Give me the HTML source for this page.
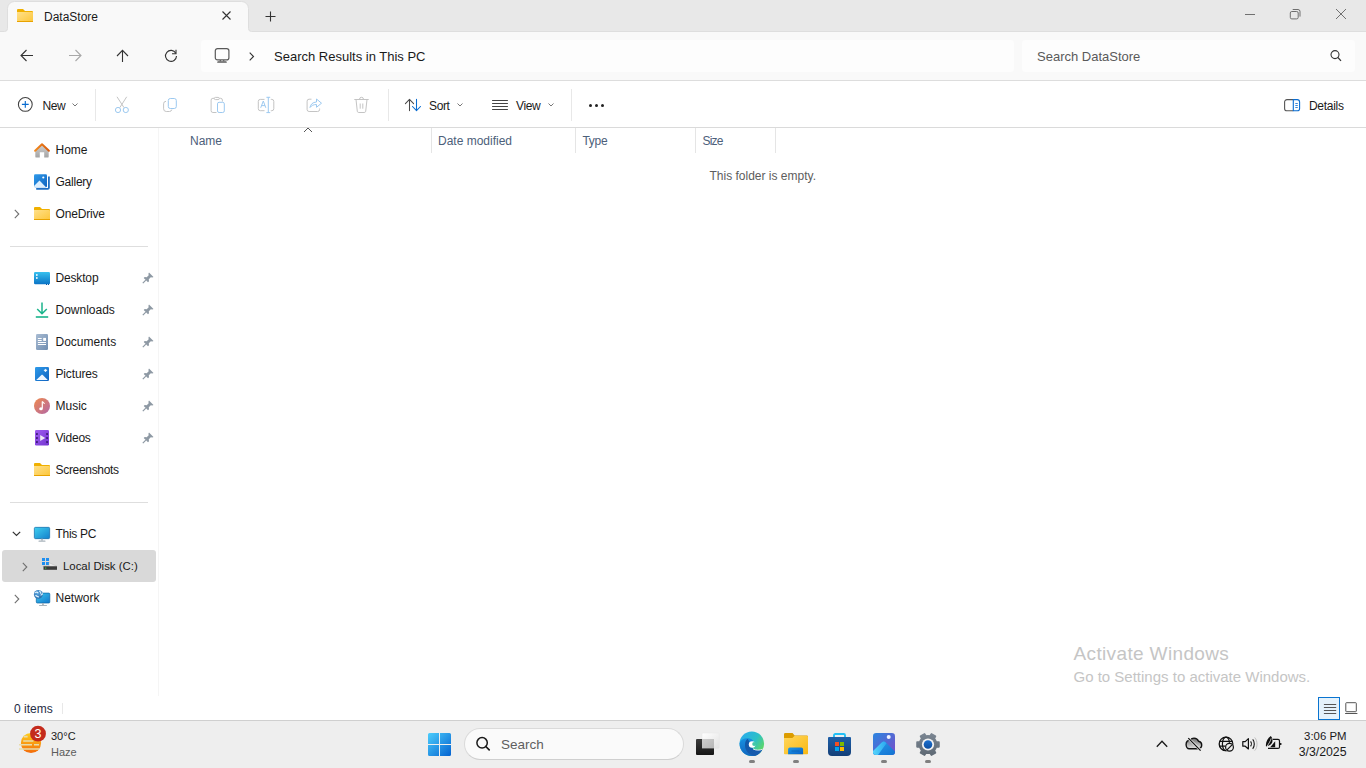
<!DOCTYPE html>
<html><head><meta charset="utf-8">
<style>
html,body{margin:0;padding:0;width:1366px;height:768px;overflow:hidden;background:#fff}
body{font-family:"Liberation Sans",sans-serif;position:relative;color:#1a1a1a}
.a{position:absolute}
.t{position:absolute;white-space:pre;font-size:12px;line-height:12px}
svg{position:absolute;overflow:visible}
</style></head><body>

<!-- title bar -->
<div class="a" style="left:0;top:0;width:1366px;height:32px;background:#e8e8e8"></div>
<svg style="left:0;top:0" width="1366" height="34" viewBox="0 0 1366 34">
<path d="M0 31.5H4.5A3 3 0 0 0 7.5 28.5V8.5A7 7 0 0 1 14.5 1.5H241.5A7 7 0 0 1 248.5 8.5V28.5A3 3 0 0 0 251.5 31.5H1366V34H0Z" fill="#f9f9f9"/>
<path d="M0 31.5H4.5A3 3 0 0 0 7.5 28.5V8.5A7 7 0 0 1 14.5 1.5H241.5A7 7 0 0 1 248.5 8.5V28.5A3 3 0 0 0 251.5 31.5H1366" fill="none" stroke="#dedede" stroke-width="1"/>
</svg>
<!-- address row -->
<div class="a" style="left:0;top:32px;width:1366px;height:48px;background:#f9f9f9"></div>
<div class="a" style="left:0;top:80px;width:1366px;height:1px;background:#dddddd"></div>

<!-- tab content -->
<svg style="left:17px;top:9px" width="16" height="13" viewBox="0 0 16 13">
  <defs><linearGradient id="fg" x1="0" y1="0" x2="1" y2="1"><stop offset="0" stop-color="#ffe08a"/><stop offset="1" stop-color="#fcc63a"/></linearGradient></defs>
  <path d="M1 0h5l2 2h7a1 1 0 0 1 1 1v1H0V1a1 1 0 0 1 1-1z" fill="#f0b000"/>
  <path d="M0 3h15a1 1 0 0 1 1 1v8a1 1 0 0 1-1 1H1a1 1 0 0 1-1-1z" fill="url(#fg)"/>
  <rect x="0" y="12" width="16" height="1" fill="#e8a200"/>
</svg>
<div class="t" style="left:44px;top:10.8px;color:#1a1a1a">DataStore</div>
<svg style="left:222px;top:11px" width="9" height="9"><path d="M0.5 0.5L8.5 8.5M8.5 0.5L0.5 8.5" stroke="#333" stroke-width="1.1"/></svg>
<svg style="left:265px;top:11px" width="11" height="11"><path d="M5.5 0.5V10.5M0.5 5.5H10.5" stroke="#333" stroke-width="1.1"/></svg>

<!-- window controls -->
<div class="a" style="left:1245px;top:14px;width:10px;height:1px;background:#707070"></div>
<svg style="left:1289px;top:8px" width="13" height="13"><rect x="1.3" y="3.5" width="7.9" height="7.4" rx="1.5" fill="none" stroke="#6e6e6e" stroke-width="1"/><path d="M3.7 1.5H9A2 2 0 0 1 11 3.5V8.6" fill="none" stroke="#6e6e6e" stroke-width="1"/></svg>
<svg style="left:1336px;top:9px" width="10" height="10"><path d="M0 0L10 10M10 0L0 10" stroke="#707070" stroke-width="1"/></svg>

<!-- nav buttons -->
<svg style="left:20px;top:49px" width="14" height="13"><path d="M13 6.5H1.5M6.5 1L1 6.5L6.5 12" fill="none" stroke="#333" stroke-width="1.1"/></svg>
<svg style="left:68px;top:49px" width="14" height="13"><path d="M1 6.5H12.5M7.5 1L13 6.5L7.5 12" fill="none" stroke="#a8a8a8" stroke-width="1.1"/></svg>
<svg style="left:116px;top:49px" width="13" height="14"><path d="M6.5 13V1.5M1 7L6.5 1.3L12 7" fill="none" stroke="#333" stroke-width="1.1"/></svg>
<svg style="left:164px;top:49px" width="14" height="14"><path d="M11.8 4.2A5.5 5.5 0 1 0 12.5 7" fill="none" stroke="#333" stroke-width="1.1"/><path d="M12 0.8V4.8H8" fill="none" stroke="#333" stroke-width="1.1"/></svg>

<!-- address box -->
<div class="a" style="left:201px;top:40px;width:813px;height:32px;background:#fdfdfd;border-radius:4px"></div>
<svg style="left:214px;top:47px" width="16" height="17" viewBox="0 0 16 17"><rect x="1.3" y="1.6" width="13.6" height="11.3" rx="2.2" fill="none" stroke="#5a5a5a" stroke-width="1.2"/><path d="M5.7 12.9H6.9V14.2H5.7ZM9.2 12.9H10.3V14.2H9.2Z" fill="#5a5a5a"/><path d="M3.6 14.2H12.4L12.9 15.8H3.1Z" fill="#5a5a5a"/></svg>
<svg style="left:249px;top:52px" width="6" height="9"><path d="M0.7 0.7L4.5 4.5L0.7 8.3" fill="none" stroke="#333" stroke-width="1.1"/></svg>
<div class="t" style="left:274px;top:49.8px;font-size:13px;line-height:13px;color:#1a1a1a">Search Results in This PC</div>

<!-- search box -->
<div class="a" style="left:1022px;top:40px;width:333px;height:32px;background:#fdfdfd;border-radius:4px"></div>
<div class="t" style="left:1037px;top:49.8px;font-size:13px;line-height:13px;color:#5a5a5a">Search DataStore</div>
<svg style="left:1330px;top:49px" width="13" height="13"><circle cx="5" cy="5.6" r="4" fill="none" stroke="#333" stroke-width="1.1"/><path d="M7.9 8.5L11 11.8" stroke="#333" stroke-width="1.2"/></svg>

<!-- command bar -->
<div class="a" style="left:0;top:127px;width:1366px;height:1px;background:#dadada"></div>
<svg style="left:17px;top:96px" width="17" height="17"><circle cx="8.3" cy="8.4" r="6.9" fill="none" stroke="#404040" stroke-width="1.05"/><path d="M8.3 5V11.8M4.9 8.4H11.7" stroke="#0a6cd0" stroke-width="1.15"/></svg>
<div class="t" style="left:42.5px;top:99.6px;letter-spacing:-0.4px">New</div>
<svg style="left:72px;top:103px" width="6" height="4"><path d="M0.5 0.5L3 3L5.5 0.5" fill="none" stroke="#777" stroke-width="1"/></svg>
<div class="a" style="left:95px;top:89px;width:1px;height:32px;background:#e8e8e8"></div>


<!-- disabled clipboard icons -->
<svg style="left:110px;top:92px" width="24" height="24" viewBox="0 0 24 24">
  <path d="M7 4.8L14 15.6M16.7 4.8L9.8 15.6" stroke="#c4c4c4" stroke-width="1"/>
  <circle cx="8" cy="18" r="2.6" fill="none" stroke="#9cc9f0" stroke-width="1"/>
  <circle cx="15.8" cy="18" r="2.6" fill="none" stroke="#9cc9f0" stroke-width="1"/>
</svg>
<svg style="left:158px;top:92px" width="24" height="24" viewBox="0 0 24 24">
  <rect x="10.3" y="6.5" width="8" height="10" rx="2" fill="none" stroke="#9cc9f0" stroke-width="1"/>
  <path d="M8 9.3A2.5 2.5 0 0 0 5.6 11.8V16.8A2.7 2.7 0 0 0 8.3 19.5H11.5A2.4 2.4 0 0 0 13.8 17.6" fill="none" stroke="#c4c4c4" stroke-width="1"/>
</svg>
<svg style="left:206px;top:92px" width="24" height="24" viewBox="0 0 24 24">
  <path d="M8 6.3H6.9A1.8 1.8 0 0 0 5.1 8.1V18.7A1.8 1.8 0 0 0 6.9 20.5H10.5M16.4 9.5V8.1A1.8 1.8 0 0 0 14.6 6.3H13.5" fill="none" stroke="#c4c4c4" stroke-width="1"/>
  <rect x="8.3" y="5.4" width="5" height="2.2" rx="1.1" fill="none" stroke="#c4c4c4" stroke-width="1"/>
  <rect x="11.5" y="10.3" width="6.8" height="10.2" rx="1.6" fill="none" stroke="#9cc9f0" stroke-width="1"/>
</svg>
<svg style="left:254px;top:92px" width="24" height="24" viewBox="0 0 24 24">
  <path d="M10.5 7.4H6.3A2 2 0 0 0 4.3 9.4V16.7A2 2 0 0 0 6.3 18.7H10.5M16.8 7.4H17.8A2 2 0 0 1 19.8 9.4V16.7A2 2 0 0 1 17.8 18.7H16.8" fill="none" stroke="#c4c4c4" stroke-width="1"/>
  <path d="M14.3 5.3V20.6M12.4 5.3H16.2M12.4 20.6H16.2" stroke="#9cc9f0" stroke-width="1"/>
  <path d="M6.7 15.8L9.3 9L11.8 15.8M7.6 13.6H11" fill="none" stroke="#9cc9f0" stroke-width="1"/>
</svg>
<svg style="left:302px;top:92px" width="24" height="24" viewBox="0 0 24 24">
  <path d="M9.5 7.2H7.1A2 2 0 0 0 5.1 9.2V17.5A2 2 0 0 0 7.1 19.5H15.6A2 2 0 0 0 17.6 17.5V16.5" fill="none" stroke="#c4c4c4" stroke-width="1"/>
  <path d="M8 15.5C8.5 12.5 10.5 10.2 14.5 10V7L19.5 11.2L14.5 15.3V12.5C11.5 12.5 9.5 13.5 8 15.5Z" fill="none" stroke="#9cc9f0" stroke-width="1" stroke-linejoin="round"/>
</svg>
<svg style="left:350px;top:92px" width="24" height="24" viewBox="0 0 24 24">
  <path d="M4.3 7.5H18.7M6 7.5L7.3 19.3A1.5 1.5 0 0 0 8.8 20.5H14.2A1.5 1.5 0 0 0 15.7 19.3L17 7.5M9.5 7.3A2 2 0 0 1 13.5 7.3" fill="none" stroke="#c4c4c4" stroke-width="1"/>
  <path d="M10.2 11.5V16.7M12.8 11.5V16.7" stroke="#c4c4c4" stroke-width="1"/>
</svg>
<div class="a" style="left:388px;top:89px;width:1px;height:32px;background:#e8e8e8"></div>

<!-- sort -->
<svg style="left:404px;top:98px" width="18" height="14" viewBox="0 0 18 14">
  <path d="M5.5 12.6V1.6M1.4 5.6L5.5 1.4L9.6 5.6" fill="none" stroke="#4a4a4a" stroke-width="1.05" stroke-linecap="round" stroke-linejoin="round"/>
  <path d="M12.5 1.2V12.4M8.5 8.5L12.5 12.6L16.5 8.5" fill="none" stroke="#0a6cd0" stroke-width="1.05" stroke-linecap="round" stroke-linejoin="round"/>
</svg>
<div class="t" style="left:429px;top:99.6px;letter-spacing:-0.35px">Sort</div>
<svg style="left:457px;top:103px" width="6" height="4"><path d="M0.5 0.5L3 3L5.5 0.5" fill="none" stroke="#777" stroke-width="1"/></svg>
<!-- view -->
<svg style="left:492px;top:99px" width="16" height="12" viewBox="0 0 16 12">
  <path d="M0.5 1.5H15.5M0.5 4.5H15.5M0.5 7.5H15.5M0.5 10.5H15.5" stroke="#444" stroke-width="1" stroke-linecap="round"/>
</svg>
<div class="t" style="left:516px;top:99.6px;letter-spacing:-0.35px">View</div>
<svg style="left:548px;top:103px" width="6" height="4"><path d="M0.5 0.5L3 3L5.5 0.5" fill="none" stroke="#777" stroke-width="1"/></svg>
<div class="a" style="left:571px;top:89px;width:1px;height:32px;background:#e8e8e8"></div>
<!-- more -->
<div class="a" style="left:588.5px;top:104px;width:3px;height:3px;border-radius:50%;background:#222"></div>
<div class="a" style="left:594.5px;top:104px;width:3px;height:3px;border-radius:50%;background:#222"></div>
<div class="a" style="left:600.5px;top:104px;width:3px;height:3px;border-radius:50%;background:#222"></div>
<!-- details -->
<svg style="left:1284px;top:99px" width="17" height="13" viewBox="0 0 17 13">
  <path d="M9.3 0.6H3A2.4 2.4 0 0 0 0.6 3V9.4A2.4 2.4 0 0 0 3 11.8H9.3" fill="none" stroke="#555" stroke-width="1.1"/>
  <path d="M9.3 0.6H13.2A2.4 2.4 0 0 1 15.6 3V9.4A2.4 2.4 0 0 1 13.2 11.8H9.3Z" fill="none" stroke="#0a6cd0" stroke-width="1.1"/>
  <path d="M11.3 4.5H13.8M11.3 6.5H13.8M11.3 8.5H13.8" stroke="#0a6cd0" stroke-width="0.8"/>
</svg>
<div class="t" style="left:1309px;top:99.8px;letter-spacing:-0.3px">Details</div>

<!-- nav pane border -->
<div class="a" style="left:158px;top:128px;width:1px;height:568px;background:#f5f5f5"></div>

<!-- column headers -->
<div class="t" style="left:190px;top:134.8px;color:#4c607a">Name</div>
<svg style="left:303px;top:127px" width="10" height="6"><path d="M1 5L5 1L9 5" fill="none" stroke="#555" stroke-width="1"/></svg>
<div class="a" style="left:431px;top:128px;width:1px;height:25px;background:#e5e5e5"></div>
<div class="t" style="left:438px;top:134.8px;color:#4c607a">Date modified</div>
<div class="a" style="left:575px;top:128px;width:1px;height:25px;background:#e5e5e5"></div>
<div class="t" style="left:582.5px;top:134.8px;letter-spacing:-0.3px;color:#4c607a">Type</div>
<div class="a" style="left:695px;top:128px;width:1px;height:25px;background:#e5e5e5"></div>
<div class="t" style="left:702.5px;top:134.8px;letter-spacing:-0.8px;color:#4c607a">Size</div>
<div class="a" style="left:775px;top:128px;width:1px;height:25px;background:#e5e5e5"></div>
<div class="t" style="left:709.5px;top:170.3px;color:#5d5d5d">This folder is empty.</div>


<!-- NAV PANE -->
<!-- Home -->
<svg style="left:34px;top:142px" width="16" height="16" viewBox="0 0 16 16">
  <defs><linearGradient id="hg" x1="0" y1="0" x2="0" y2="1"><stop offset="0" stop-color="#d0d0d0"/><stop offset="1" stop-color="#a4a4a4"/></linearGradient>
  <linearGradient id="rg" x1="0" y1="0" x2="1" y2="0"><stop offset="0" stop-color="#f28a1e"/><stop offset="1" stop-color="#d85a0c"/></linearGradient></defs>
  <path d="M1.3 8.3L8 2.6L14.7 8.3V14.4A1.2 1.2 0 0 1 13.5 15.6H10.2V10.2H5.8V15.6H2.5A1.2 1.2 0 0 1 1.3 14.4Z" fill="url(#hg)"/>
  <path d="M1.1 8.7L8 2.3L14.9 8.7" fill="none" stroke="url(#rg)" stroke-width="2" stroke-linecap="round" stroke-linejoin="round"/>
</svg>
<div class="t" style="left:55.5px;top:144px">Home</div>
<!-- Gallery -->
<svg style="left:34px;top:174px" width="16" height="16" viewBox="0 0 16 16">
  <path d="M2.2 14.8H13.8A1.1 1.1 0 0 0 14.9 13.7V2.4" fill="none" stroke="#1f6fc4" stroke-width="1.8"/>
  <defs><linearGradient id="gg" x1="0" y1="0" x2="1" y2="1"><stop offset="0" stop-color="#2f9bea"/><stop offset="1" stop-color="#0f62c0"/></linearGradient></defs>
  <rect x="0" y="0.3" width="13" height="13" rx="1.3" fill="url(#gg)"/>
  <path d="M0 12L5.5 6.5L12 13.3H1.3A1.3 1.3 0 0 1 0 12Z" fill="#dcefff"/>
  <circle cx="9.3" cy="3.5" r="1.1" fill="#fff"/>
</svg>
<div class="t" style="left:55.5px;top:176px;letter-spacing:-0.24px">Gallery</div>
<!-- OneDrive -->
<svg style="left:14px;top:209px" width="6" height="10"><path d="M0.8 0.8L4.8 5L0.8 9.2" fill="none" stroke="#707070" stroke-width="1.1"/></svg>
<svg style="left:34px;top:207px" width="16" height="13" viewBox="0 0 16 13">
  <path d="M1 0h5l2 2h7a1 1 0 0 1 1 1v1H0V1a1 1 0 0 1 1-1z" fill="#f0b000"/>
  <path d="M0 3h15a1 1 0 0 1 1 1v8a1 1 0 0 1-1 1H1a1 1 0 0 1-1-1z" fill="url(#fg)"/>
  <rect x="0" y="12" width="16" height="1" fill="#e8a200"/>
</svg>
<div class="t" style="left:55.5px;top:208px;letter-spacing:-0.17px">OneDrive</div>

<div class="a" style="left:10px;top:246px;width:138px;height:1px;background:#dedede"></div>

<!-- Desktop -->
<svg style="left:34px;top:272px" width="16" height="13" viewBox="0 0 16 13">
  <defs><linearGradient id="dg" x1="0" y1="0" x2="0" y2="1"><stop offset="0" stop-color="#38c0ee"/><stop offset="1" stop-color="#0a74c6"/></linearGradient></defs>
  <rect x="0" y="0" width="16" height="12.2" rx="1.2" fill="url(#dg)"/>
  <rect x="2" y="2.2" width="1.6" height="1.6" fill="#fff"/><rect x="2" y="5.2" width="1.6" height="1.6" fill="#fff"/>
  <rect x="12" y="12" width="1" height="1" fill="#0a5aa0"/><rect x="14" y="12" width="1" height="1" fill="#0a5aa0"/>
</svg>
<div class="t" style="left:55.5px;top:272px;letter-spacing:-0.16px">Desktop</div>
<!-- Downloads -->
<svg style="left:35px;top:302px" width="14" height="16" viewBox="0 0 14 16">
  <path d="M7 0.5V11.5M2.2 7L7 11.8L11.8 7" fill="none" stroke="#1bb48c" stroke-width="1.5"/>
  <rect x="0.8" y="14.2" width="12.4" height="1.6" fill="#1bb48c"/>
</svg>
<div class="t" style="left:55.5px;top:304px">Downloads</div>
<!-- Documents -->
<svg style="left:36px;top:334px" width="12" height="16" viewBox="0 0 12 16">
  <defs><linearGradient id="docg" x1="0" y1="0" x2="1" y2="1"><stop offset="0" stop-color="#a9bcd3"/><stop offset="1" stop-color="#6f8db0"/></linearGradient></defs>
  <rect x="0" y="0" width="12" height="16" rx="1.2" fill="url(#docg)"/>
  <path d="M1.9 4.5H5.7M1.9 6.5H5.7M1.9 8.5H10M1.9 10.5H10" stroke="#fff" stroke-width="1"/>
  <rect x="7.2" y="3.9" width="2.8" height="3" fill="#fff"/>
</svg>
<div class="t" style="left:55.5px;top:336px">Documents</div>
<!-- Pictures -->
<svg style="left:35px;top:367px" width="14" height="14" viewBox="0 0 14 14">
  <rect x="0" y="0" width="14" height="14" rx="1.3" fill="url(#gg)"/>
  <path d="M1.2 13.1L6.2 8.2C6.7 7.6 7.5 7.6 8 8.2L12.8 13.1Z" fill="#eef6ff"/>
  <path d="M10.5 1.9L11 3L12.1 3.4L11 3.8L10.5 4.9L10 3.8L8.9 3.4L10 3Z" fill="#fff" stroke="#fff" stroke-width="0.6"/>
</svg>
<div class="t" style="left:55.5px;top:368px;letter-spacing:-0.15px">Pictures</div>
<!-- Music -->
<svg style="left:34px;top:398px" width="16" height="16" viewBox="0 0 16 16">
  <defs><linearGradient id="mg" x1="0" y1="0" x2="1" y2="1"><stop offset="0" stop-color="#f08a4b"/><stop offset="1" stop-color="#b267a8"/></linearGradient></defs>
  <circle cx="8" cy="8" r="8" fill="url(#mg)"/>
  <path d="M8.3 3.5V10.5" stroke="#fff" stroke-width="1.2"/>
  <ellipse cx="7" cy="10.8" rx="1.8" ry="1.5" fill="#fff"/>
  <path d="M8.3 3.5C9 4.5 10.3 4.8 10.3 6" fill="none" stroke="#fff" stroke-width="1.1"/>
</svg>
<div class="t" style="left:55.5px;top:400px">Music</div>
<!-- Videos -->
<svg style="left:35px;top:430px" width="14" height="16" viewBox="0 0 14 16">
  <defs><linearGradient id="vg" x1="0" y1="0" x2="1" y2="1"><stop offset="0" stop-color="#9e5cf0"/><stop offset="1" stop-color="#7435d0"/></linearGradient></defs>
  <rect x="0" y="0" width="14" height="15.5" rx="1.2" fill="url(#vg)"/>
  <rect x="1" y="3.1" width="1.8" height="1.8" rx="0.3" fill="#3c1a78"/><rect x="1" y="7.1" width="1.8" height="1.8" rx="0.3" fill="#3c1a78"/><rect x="1" y="11.1" width="1.8" height="1.8" rx="0.3" fill="#3c1a78"/>
  <rect x="11.2" y="3.1" width="1.8" height="1.8" rx="0.3" fill="#3c1a78"/><rect x="11.2" y="7.1" width="1.8" height="1.8" rx="0.3" fill="#3c1a78"/><rect x="11.2" y="11.1" width="1.8" height="1.8" rx="0.3" fill="#3c1a78"/>
  <path d="M5.2 5.1L10.2 8.1L5.2 11.1Z" fill="#ece8f2"/>
</svg>
<div class="t" style="left:55.5px;top:432px;letter-spacing:-0.23px">Videos</div>
<!-- Screenshots -->
<svg style="left:34px;top:463px" width="16" height="13" viewBox="0 0 16 13">
  <path d="M1 0h5l2 2h7a1 1 0 0 1 1 1v1H0V1a1 1 0 0 1 1-1z" fill="#f0b000"/>
  <path d="M0 3h15a1 1 0 0 1 1 1v8a1 1 0 0 1-1 1H1a1 1 0 0 1-1-1z" fill="url(#fg)"/>
  <rect x="0" y="12" width="16" height="1" fill="#e8a200"/>
</svg>
<div class="t" style="left:55.5px;top:464px;letter-spacing:-0.31px">Screenshots</div>

<!-- pins -->
<svg style="left:142px;top:272px" width="12" height="12" viewBox="0 0 12 12"><path d="M7 0.5L11.5 5L10.3 5.6L8.8 5.3L6.8 7.3L7 9.3L6 10.3L1.7 6L2.7 5L4.7 5.2L6.7 3.2L6.4 1.7Z" fill="#8e99a4"/><path d="M3.8 8.2L0.8 11.2" stroke="#8e99a4" stroke-width="1.2"/></svg>
<svg style="left:142px;top:304px" width="12" height="12" viewBox="0 0 12 12"><path d="M7 0.5L11.5 5L10.3 5.6L8.8 5.3L6.8 7.3L7 9.3L6 10.3L1.7 6L2.7 5L4.7 5.2L6.7 3.2L6.4 1.7Z" fill="#8e99a4"/><path d="M3.8 8.2L0.8 11.2" stroke="#8e99a4" stroke-width="1.2"/></svg>
<svg style="left:142px;top:336px" width="12" height="12" viewBox="0 0 12 12"><path d="M7 0.5L11.5 5L10.3 5.6L8.8 5.3L6.8 7.3L7 9.3L6 10.3L1.7 6L2.7 5L4.7 5.2L6.7 3.2L6.4 1.7Z" fill="#8e99a4"/><path d="M3.8 8.2L0.8 11.2" stroke="#8e99a4" stroke-width="1.2"/></svg>
<svg style="left:142px;top:368px" width="12" height="12" viewBox="0 0 12 12"><path d="M7 0.5L11.5 5L10.3 5.6L8.8 5.3L6.8 7.3L7 9.3L6 10.3L1.7 6L2.7 5L4.7 5.2L6.7 3.2L6.4 1.7Z" fill="#8e99a4"/><path d="M3.8 8.2L0.8 11.2" stroke="#8e99a4" stroke-width="1.2"/></svg>
<svg style="left:142px;top:400px" width="12" height="12" viewBox="0 0 12 12"><path d="M7 0.5L11.5 5L10.3 5.6L8.8 5.3L6.8 7.3L7 9.3L6 10.3L1.7 6L2.7 5L4.7 5.2L6.7 3.2L6.4 1.7Z" fill="#8e99a4"/><path d="M3.8 8.2L0.8 11.2" stroke="#8e99a4" stroke-width="1.2"/></svg>
<svg style="left:142px;top:432px" width="12" height="12" viewBox="0 0 12 12"><path d="M7 0.5L11.5 5L10.3 5.6L8.8 5.3L6.8 7.3L7 9.3L6 10.3L1.7 6L2.7 5L4.7 5.2L6.7 3.2L6.4 1.7Z" fill="#8e99a4"/><path d="M3.8 8.2L0.8 11.2" stroke="#8e99a4" stroke-width="1.2"/></svg>

<div class="a" style="left:10px;top:502px;width:138px;height:1px;background:#dedede"></div>

<!-- This PC -->
<svg style="left:12px;top:531px" width="9" height="6"><path d="M0.8 0.8L4.5 4.5L8.2 0.8" fill="none" stroke="#333" stroke-width="1.2"/></svg>
<svg style="left:34px;top:527px" width="16" height="15" viewBox="0 0 16 15">
  <defs><linearGradient id="pcg" x1="0" y1="0" x2="1" y2="1"><stop offset="0" stop-color="#40d0f0"/><stop offset="1" stop-color="#1480cc"/></linearGradient></defs>
  <rect x="0.35" y="0.35" width="15.3" height="11.3" rx="1.1" fill="url(#pcg)" stroke="#0b66a6" stroke-width="0.7"/>
  <rect x="7.2" y="11.7" width="1.6" height="2" fill="#a9b4bc"/>
  <rect x="4.5" y="13.6" width="7" height="1.2" rx="0.5" fill="#a9b4bc"/>
</svg>
<div class="t" style="left:55.5px;top:528px;letter-spacing:-0.3px">This PC</div>
<!-- Local Disk selected -->
<div class="a" style="left:2px;top:550px;width:154px;height:32px;background:#d9d9d9;border-radius:3px"></div>
<svg style="left:22px;top:562px" width="6" height="10"><path d="M0.8 0.8L4.8 5L0.8 9.2" fill="none" stroke="#707070" stroke-width="1.1"/></svg>
<svg style="left:42px;top:558px" width="16" height="12" viewBox="0 0 16 12">
  <rect x="0" y="0" width="3" height="3" fill="#1d8ef0"/><rect x="4" y="0" width="3" height="3" fill="#1d8ef0"/>
  <rect x="0" y="4" width="3" height="3" fill="#1d8ef0"/><rect x="4" y="4" width="3" height="3" fill="#1d8ef0"/>
  <path d="M7 4.7L15 8.3H0.8L7 8Z" fill="#ececec" stroke="#b0b0b0" stroke-width="0.4"/>
  <rect x="1.5" y="8.3" width="13.5" height="3.5" fill="#3a3a3a"/>
  <rect x="3" y="9.5" width="1.3" height="1.1" fill="#3fd04a"/>
</svg>
<div class="t" style="left:63px;top:560px;font-size:11.4px">Local Disk (C:)</div>
<!-- Network -->
<svg style="left:14px;top:594px" width="6" height="10"><path d="M0.8 0.8L4.8 5L0.8 9.2" fill="none" stroke="#707070" stroke-width="1.1"/></svg>
<svg style="left:34px;top:590px" width="16" height="16" viewBox="0 0 16 16">
  <defs><linearGradient id="nwg" x1="0" y1="0" x2="1" y2="1"><stop offset="0" stop-color="#3cc8ee"/><stop offset="1" stop-color="#1478cc"/></linearGradient>
  <radialGradient id="glb" cx="0.4" cy="0.35" r="0.7"><stop offset="0" stop-color="#5aa6e0"/><stop offset="1" stop-color="#2a6aa8"/></radialGradient></defs>
  <rect x="2.3" y="3.1" width="13.5" height="9.9" rx="1" fill="url(#nwg)" stroke="#0b66a6" stroke-width="0.7"/>
  <rect x="8.1" y="13" width="1.7" height="2" fill="#a9b4bc"/>
  <rect x="5" y="14.9" width="8" height="1.1" rx="0.5" fill="#a9b4bc"/>
  <circle cx="4.3" cy="4.4" r="4.4" fill="url(#glb)"/>
  <path d="M1.5 2.6C2.5 2 3.5 2.2 4 2.8M5.6 1.2C6.5 1.8 7 2.8 6.8 3.5M1.8 5.5C2.6 6.3 3.6 6.8 4.5 6.9M7 5C7.8 4.8 8.3 4.3 8.5 3.8" fill="none" stroke="#dff2ff" stroke-width="1.1" stroke-linecap="round"/>
</svg>
<div class="t" style="left:55.5px;top:592px">Network</div>

<!-- status bar -->
<div class="t" style="left:14px;top:702.8px;color:#1f2d45">0 items</div>
<div class="a" style="left:62px;top:703px;width:1px;height:11px;background:#e8e8e8"></div>
<!-- view buttons -->
<div class="a" style="left:1318px;top:697px;width:20px;height:21px;border:1px solid #0a74d0;background:#e5f2fb"></div>
<svg style="left:1323px;top:703px" width="14" height="12" viewBox="0 0 14 12"><path d="M1.3 1.5H12.8M1.3 4.5H12.8M1.3 7.5H12.8M1.3 10.5H12.8" stroke="#555" stroke-width="1" stroke-linecap="round"/></svg>
<svg style="left:1344px;top:702px" width="14" height="13" viewBox="0 0 14 13"><rect x="1.8" y="0.7" width="10.5" height="9" rx="0.6" fill="none" stroke="#555" stroke-width="1"/><path d="M1.5 11.5H13" stroke="#555" stroke-width="1" stroke-linecap="round"/></svg>

<!-- activate windows -->
<div class="t" style="left:1073.5px;top:644.2px;font-size:19px;line-height:19px;letter-spacing:0.36px;color:#c5c5c5">Activate Windows</div>
<div class="t" style="left:1073.5px;top:669.3px;font-size:15px;line-height:15px;color:#c5c5c5">Go to Settings to activate Windows.</div>

<!-- TASKBAR -->
<div class="a" style="left:0;top:720px;width:1366px;height:48px;background:#eeeeee;border-top:1px solid #cfcfcf;box-sizing:border-box"></div>


<!-- weather -->
<svg style="left:17px;top:726px" width="34" height="30" viewBox="0 0 34 30">
  <defs><linearGradient id="sun" x1="0" y1="0" x2="0" y2="1"><stop offset="0" stop-color="#ffcf1a"/><stop offset="1" stop-color="#f36a0a"/></linearGradient></defs>
  <circle cx="14" cy="17" r="10.1" fill="url(#sun)"/>
  <path d="M6.8 10.6H10.6M6.2 15H16.4M2 18.8H15M17 18.8H22M2 23H22.3" stroke="#e9dcaa" stroke-width="1.6"/>
  <circle cx="21" cy="7.7" r="7.9" fill="#c42b1c"/>
  <text x="21" y="11.9" text-anchor="middle" font-family="Liberation Sans" font-size="12.5" font-weight="400" fill="#fff">3</text>
</svg>
<div class="t" style="left:51px;top:730.5px;font-size:11px;line-height:11px;color:#1a1a1a">30°C</div>
<div class="t" style="left:51px;top:746.6px;font-size:11px;line-height:11px;color:#5c5c5c">Haze</div>

<!-- start -->
<svg style="left:428px;top:733px" width="23" height="23" viewBox="0 0 23 23">
  <defs><linearGradient id="wg" gradientUnits="userSpaceOnUse" x1="0" y1="0" x2="23" y2="23"><stop offset="0" stop-color="#4ccdfc"/><stop offset="1" stop-color="#0462d0"/></linearGradient></defs>
  <path d="M1.5 0H11V11H0V1.5A1.5 1.5 0 0 1 1.5 0Z M12 0H21.5A1.5 1.5 0 0 1 23 1.5V11H12Z M0 12H11V23H1.5A1.5 1.5 0 0 1 0 21.5Z M12 12H23V21.5A1.5 1.5 0 0 1 21.5 23H12Z" fill="url(#wg)"/>
</svg>
<!-- search pill -->
<div class="a" style="left:464px;top:728px;width:220px;height:32px;box-sizing:border-box;border-radius:16px;background:#fafafa;border:1px solid #dadada;border-bottom-color:#cfcfcf"></div>
<svg style="left:475px;top:737px" width="16" height="15" viewBox="0 0 16 15"><circle cx="7.1" cy="5.8" r="5.2" fill="none" stroke="#1a1a1a" stroke-width="1.5"/><path d="M10.8 9.5L14.2 12.9" stroke="#1a1a1a" stroke-width="1.7" stroke-linecap="round"/></svg>
<div class="t" style="left:501px;top:737.7px;font-size:13.5px;line-height:13.5px;color:#5f5f5f">Search</div>

<!-- task view -->
<svg style="left:696px;top:733px" width="25" height="23" viewBox="0 0 25 23">
  <defs><linearGradient id="tv1" x1="0" y1="0" x2="1" y2="1"><stop offset="0" stop-color="#ffffff"/><stop offset="1" stop-color="#e2e2e2"/></linearGradient>
  <linearGradient id="tv2" x1="0" y1="0" x2="0" y2="1"><stop offset="0" stop-color="#3c3c3c"/><stop offset="1" stop-color="#151515"/></linearGradient>
  <linearGradient id="tv3" x1="0" y1="0" x2="1" y2="1"><stop offset="0" stop-color="#cdcdcd"/><stop offset="1" stop-color="#b6b6b6"/></linearGradient></defs>
  <rect x="6" y="0" width="17.3" height="15.4" rx="1" fill="url(#tv1)" stroke="#e4e4e4" stroke-width="0.5"/>
  <rect x="0" y="6" width="18" height="16" rx="1" fill="url(#tv2)"/>
  <rect x="6" y="6" width="12" height="9.4" fill="url(#tv3)"/>
</svg>
<!-- edge -->
<svg style="left:739px;top:731px" width="26" height="26" viewBox="0 0 26 26">
  <defs>
    <linearGradient id="e1" x1="0.15" y1="0.1" x2="0.95" y2="0.65"><stop offset="0" stop-color="#2aaee8"/><stop offset="0.55" stop-color="#2cc0c8"/><stop offset="1" stop-color="#5bd66a"/></linearGradient>
    <linearGradient id="e2" x1="0" y1="0" x2="0" y2="1"><stop offset="0" stop-color="#1690e0"/><stop offset="1" stop-color="#1266c0"/></linearGradient>
    <linearGradient id="e3" x1="0" y1="0" x2="1" y2="1"><stop offset="0" stop-color="#0f58a8"/><stop offset="1" stop-color="#1a5cb0"/></linearGradient>
  </defs>
  <circle cx="12.8" cy="12.8" r="12.3" fill="url(#e1)"/>
  <path d="M0.6 12.5C1.2 8.8 4.8 7.2 8.6 7.2C12.4 7.2 14.6 9.4 14.6 11.6C14.6 13 13.4 13.9 12.7 14.6C12.1 15.3 12.4 17 14.1 18C16.6 19.3 20.6 19.5 23.4 18.4C21.6 22 17.6 25.1 12.8 25.1C6 25.1 0.4 19.5 0.6 12.5Z" fill="url(#e2)"/>
  <path d="M8.6 7.8C5.6 9.8 5.4 15 6.9 18.6C8.4 22.2 11.6 24.6 16 24.7C19.2 24 21.6 21.6 23.4 18.4C20 19.8 16.2 19.4 14.1 18C12.4 17 12.1 15.3 12.7 14.6Z" fill="url(#e3)"/>
  <path d="M23.6 18.2C20.6 19.6 16.6 19.4 14 17.9" fill="none" stroke="#f4f4f4" stroke-width="0.9"/>
  <circle cx="13.1" cy="13.5" r="3.3" fill="#ffffff"/>
  <circle cx="15.2" cy="12.9" r="2.0" fill="#40c8a8"/>
</svg>
<!-- file explorer -->
<svg style="left:784px;top:733px" width="24" height="22" viewBox="0 0 24 22">
  <defs><linearGradient id="fe" x1="0" y1="0" x2="1" y2="1"><stop offset="0" stop-color="#ffd65c"/><stop offset="1" stop-color="#f9b812"/></linearGradient>
  <linearGradient id="feb" x1="0" y1="0" x2="1" y2="1"><stop offset="0" stop-color="#1c98e6"/><stop offset="1" stop-color="#0860c8"/></linearGradient></defs>
  <path d="M1.2 0H8.6L10.6 2.6H22.8A1.2 1.2 0 0 1 24 3.8V6H0V1.2A1.2 1.2 0 0 1 1.2 0Z" fill="#dc9c00"/>
  <path d="M0 4.9H8.4L10.4 3.1H23A1 1 0 0 1 24 4.1V20.4A0.8 0.8 0 0 1 23.2 21.2H0.8A0.8 0.8 0 0 1 0 20.4Z" fill="url(#fe)"/>
  <path d="M4.1 21.2V16.3A1.8 1.8 0 0 1 5.9 14.5H17.3A1.8 1.8 0 0 1 19.1 16.3V21.2Z" fill="url(#feb)"/>
  <path d="M7.5 18H15.5" stroke="#0d5aa8" stroke-width="0.9" opacity="0.7"/>
</svg>
<!-- store -->
<svg style="left:828px;top:733px" width="23" height="23" viewBox="0 0 23 23">
  <defs><linearGradient id="st" x1="0" y1="0" x2="0" y2="1"><stop offset="0" stop-color="#1d5fa8"/><stop offset="1" stop-color="#143f78"/></linearGradient></defs>
  <path d="M6 6V2.3A1.3 1.3 0 0 1 7.3 1H15.7A1.3 1.3 0 0 1 17 2.3V6" fill="none" stroke="#22c0f6" stroke-width="1.9"/>
  <path d="M0 5A1 1 0 0 1 1 4H22A1 1 0 0 1 23 5V19A4 4 0 0 1 19 23H4A4 4 0 0 1 0 19Z" fill="url(#st)"/>
  <rect x="7" y="9" width="4" height="4" fill="#f25022"/><rect x="12" y="9" width="4" height="4" fill="#7fba00"/>
  <rect x="7" y="14" width="4" height="4" fill="#00a4ef"/><rect x="12" y="14" width="4" height="4" fill="#ffb900"/>
</svg>
<!-- photos -->
<svg style="left:873px;top:733px" width="22" height="22" viewBox="0 0 22 22">
  <defs><linearGradient id="ph" x1="0" y1="0" x2="1" y2="1"><stop offset="0" stop-color="#2a86e0"/><stop offset="1" stop-color="#7a4cc8"/></linearGradient>
  <linearGradient id="ph2" x1="0" y1="0" x2="1" y2="0"><stop offset="0" stop-color="#5cd8fc"/><stop offset="1" stop-color="#2aa8f0"/></linearGradient>
  <linearGradient id="ph3" x1="0" y1="0" x2="1" y2="1"><stop offset="0" stop-color="#2a9cec"/><stop offset="1" stop-color="#1270d0"/></linearGradient>
  <clipPath id="phc"><rect x="0" y="0" width="22" height="22" rx="3.2"/></clipPath></defs>
  <g clip-path="url(#phc)">
  <rect x="0" y="0" width="22" height="22" fill="url(#ph)"/>
  <path d="M-1 19.5L9 9.3C10 8.2 11.5 8.2 12.5 9.3L23 19.5V23H-1Z" fill="url(#ph3)"/>
  <path d="M-1 19L9 9.3C10 8.2 11.5 8.2 12.5 9.3L13.5 10.3L5 22H-1Z" fill="url(#ph2)"/>
  </g>
  <circle cx="15.7" cy="4.1" r="2" fill="#eef4ff"/>
</svg>
<!-- settings -->
<svg style="left:916px;top:733px" width="24" height="23" viewBox="0 0 24 23">
  <defs><linearGradient id="gear" x1="0" y1="0" x2="0" y2="1"><stop offset="0" stop-color="#7a8591"/><stop offset="1" stop-color="#5f6a75"/></linearGradient>
  <linearGradient id="gearb" x1="0" y1="0" x2="0" y2="1"><stop offset="0" stop-color="#1b6fd0"/><stop offset="1" stop-color="#0f4fa0"/></linearGradient></defs>
  <path d="M19.45 7.20L20.22 8.99L22.96 9.17L22.96 13.83L20.22 14.01L19.45 15.80L18.29 17.37L19.49 19.82L15.46 22.15L13.93 19.88L12.00 20.10L10.07 19.88L8.54 22.15L4.51 19.82L5.71 17.37L4.55 15.80L3.78 14.01L1.04 13.83L1.04 9.17L3.78 8.99L4.55 7.20L5.71 5.63L4.51 3.18L8.54 0.85L10.07 3.12L12.00 2.90L13.93 3.12L15.46 0.85L19.49 3.18L18.29 5.63Z" fill="url(#gear)" stroke="url(#gear)" stroke-width="1.6" stroke-linejoin="round"/>
  <circle cx="12" cy="11.5" r="6.1" fill="#f2f2f2"/>
  <circle cx="12" cy="11.5" r="4.3" fill="url(#gearb)"/>
</svg>
<!-- running indicators -->
<div class="a" style="left:749px;top:760px;width:6px;height:3px;border-radius:2px;background:#808080"></div>
<div class="a" style="left:793px;top:760px;width:6px;height:3px;border-radius:2px;background:#808080"></div>
<div class="a" style="left:881px;top:760px;width:6px;height:3px;border-radius:2px;background:#808080"></div>
<div class="a" style="left:925px;top:760px;width:6px;height:3px;border-radius:2px;background:#808080"></div>

<!-- tray -->
<svg style="left:1156px;top:740px" width="12" height="8"><path d="M0.8 6.8L6 1.3L11.2 6.8" fill="none" stroke="#1a1a1a" stroke-width="1.3"/></svg>
<svg style="left:1185px;top:737px" width="18" height="15" viewBox="0 0 18 15">
  <defs><linearGradient id="cl" x1="0" y1="0" x2="0" y2="1"><stop offset="0" stop-color="#6e6e6e"/><stop offset="1" stop-color="#e2e2e2"/></linearGradient></defs>
  <path d="M4.2 11.7H12.5C15 11.7 16.7 10 16.7 8C16.7 6 15.3 4.5 13.5 4.2C12.8 2.2 11 1.1 9 1.1C7.5 1.1 6.2 1.8 5.5 3C3 3.2 1.1 5 1.1 7.5C1.1 9.8 2.5 11.7 4.2 11.7Z" fill="url(#cl)" stroke="#111" stroke-width="1.4"/>
  <path d="M2.6 0.6L16 13.8" stroke="#eeeeee" stroke-width="2.6"/>
  <path d="M3.3 1.1L15.6 13.6" stroke="#111" stroke-width="1.3"/>
</svg>
<svg style="left:1217px;top:735px" width="18" height="18" viewBox="0 0 18 18">
  <circle cx="9" cy="8.9" r="6.8" fill="none" stroke="#111" stroke-width="1.3"/>
  <ellipse cx="9" cy="8.9" rx="3.6" ry="6.8" fill="none" stroke="#111" stroke-width="1.2"/>
  <path d="M2.5 6.4H15.5M2.5 11.2H15.5" stroke="#111" stroke-width="1.2"/>
  <circle cx="12.5" cy="12.3" r="4.6" fill="#eeeeee"/>
  <circle cx="12.5" cy="12.3" r="3.9" fill="none" stroke="#111" stroke-width="1.2"/>
  <path d="M10 14.8L15 9.8" stroke="#111" stroke-width="1.2"/>
</svg>
<svg style="left:1242px;top:737px" width="17" height="13" viewBox="0 0 17 13">
  <path d="M0.8 4.6H3.2L6.4 1.6V12L3.2 9.2H0.8Z" fill="none" stroke="#111" stroke-width="1.2" stroke-linejoin="round"/>
  <path d="M8.6 4.4C9.6 5.5 9.6 8 8.6 9.4M10.7 2.4C12.8 4.6 12.8 9.6 10.7 11.8" fill="none" stroke="#111" stroke-width="1.1"/>
  <path d="M12.7 0.5C15.8 3.8 15.8 10.6 12.7 13.6" fill="none" stroke="#c0c0c0" stroke-width="1"/>
</svg>
<svg style="left:1265px;top:735px" width="18" height="15" viewBox="0 0 18 15">
  <path d="M3 13.4H13A1.5 1.5 0 0 0 14.5 11.9V5.9A1.5 1.5 0 0 0 13 4.4H7.8" fill="none" stroke="#111" stroke-width="1.2"/>
  <rect x="14.6" y="7.9" width="2" height="2.1" rx="0.9" fill="#111"/>
  <path d="M5.2 12.2L10.2 6.2V12.2Z" fill="#111"/>
  <path d="M1 11.6C0.4 7.2 2.4 3.6 5.8 1C7.6 3 8.2 6 6.6 8.6C5.1 10.6 3 11.1 1 11.6Z" fill="#111"/>
  <path d="M2.2 11C4 8.3 5.4 6.2 6.2 3.4" fill="none" stroke="#eeeeee" stroke-width="0.8"/>
</svg>
<div class="t" style="left:1246.5px;width:100px;text-align:right;top:729.6px;font-size:11.4px;line-height:12px;color:#1a1a1a">3:06 PM</div>
<div class="t" style="left:1246.5px;width:100px;text-align:right;top:745.8px;font-size:12.3px;line-height:12px;color:#1a1a1a">3/3/2025</div>

</body></html>
